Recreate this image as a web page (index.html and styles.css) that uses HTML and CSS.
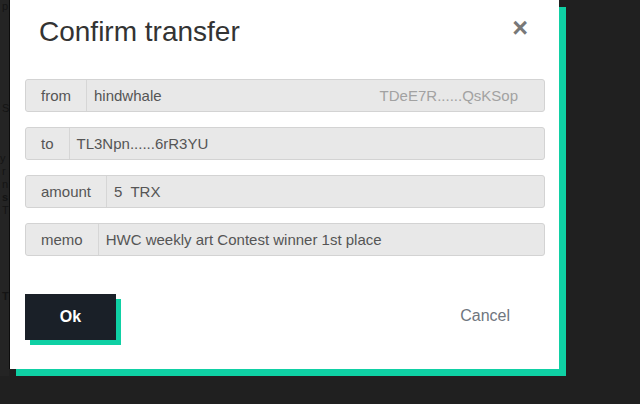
FILE: index.html
```html
<!DOCTYPE html>
<html lang="en">
<head>
    <meta charset="UTF-8">
    <meta name="viewport" content="width=device-width, initial-scale=1.0">
    <title>Confirm transfer</title>
    <link rel="stylesheet" href="styles.css">
</head>
<body>
    <div class="page-edge">
        <div class="ghost">p</div>
        <div class="ghost ghost-s">S</div>
        <div class="ghost ghost-y">y</div>
        <div class="ghost">r</div>
        <div class="ghost">n</div>
        <div class="ghost ghost-bold">s</div>
        <div class="ghost">T</div>
        <div class="ghost ghost-te">T</div>
    </div>

    <div class="modal">
        <div class="modal-header">
            <h4 class="modal-title">Confirm transfer</h4>
            <button class="close">&times;</button>
        </div>

        <div class="modal-body">
            <div class="input-group">
                <span class="addon">from</span>
                <span class="field">hindwhale</span>
                <span class="field-hint">TDeE7R......QsKSop</span>
            </div>
            <div class="input-group">
                <span class="addon">to</span>
                <span class="field">TL3Npn......6rR3YU</span>
            </div>
            <div class="input-group">
                <span class="addon">amount</span>
                <span class="field">5&nbsp; TRX</span>
            </div>
            <div class="input-group">
                <span class="addon">memo</span>
                <span class="field">HWC weekly art Contest winner 1st place</span>
            </div>
        </div>

        <div class="modal-footer">
            <button class="btn-ok">Ok</button>
            <button class="btn-cancel">Cancel</button>
        </div>
    </div>
</body>
</html>
```

FILE: styles.css
```css
body {
    margin: 0;
    height: 404px;
    overflow: hidden;
    background-color: #202020;
    font-family: "Liberation Sans", Arial, sans-serif;
    display: flex;
    align-items: flex-start;
}
.page-edge {
    width: 9px;
    height: 376px;
    overflow: hidden;
    background-color: #242424;
    color: #141414;
    font-size: 11px;
    line-height: 13px;
    white-space: nowrap;
}
.ghost {
    padding-left: 2px;
}
.ghost-s {
    margin-top: 89px;
}
.ghost-y {
    margin-top: 37px;
    padding-left: 0;
}
.ghost-bold {
    font-weight: bold;
}
.ghost-te {
    margin-top: 73px;
    font-weight: bold;
}
.modal {
    width: 549px;
    height: 369px;
    background-color: #fff;
    border-left: 1px solid #0c0c0c;
    box-shadow: 7px 7px 0 #0fd0a4;
}
.modal-header {
    display: flex;
    justify-content: space-between;
    align-items: flex-start;
    padding: 16px 31px 0 29px;
    height: 32px;
}
.modal-title {
    margin: 0;
    font-size: 28px;
    line-height: 32px;
    font-weight: normal;
    color: #333;
}
.close {
    margin-top: 0;
    padding: 0;
    border: none;
    background: none;
    font-family: "Liberation Sans", Arial, sans-serif;
    font-size: 27px;
    line-height: 24px;
    font-weight: bold;
    color: #787878;
    cursor: pointer;
}
.modal-body {
    padding: 31px 14px 0 15px;
}
.input-group {
    display: flex;
    height: 31px;
    margin-bottom: 15px;
    border: 1px solid #d3d3d3;
    border-radius: 3px;
    background-color: #e8e8e8;
    font-size: 15px;
    line-height: 31px;
    color: #555;
}
.input-group:last-child {
    margin-bottom: 0;
}
.addon {
    padding: 0 15px;
    border-right: 1px solid #d6d6d6;
    background-color: #e9e9e9;
    border-radius: 3px 0 0 3px;
}
.field {
    flex: 1;
    padding-left: 7px;
}
.field-hint {
    padding-right: 26px;
    color: #a2a2a2;
}
.modal-footer {
    display: flex;
    justify-content: space-between;
    align-items: center;
    padding: 38px 49px 29px 15px;
}
.btn-ok {
    width: 91px;
    height: 46px;
    border: none;
    background-color: #1a2028;
    color: #fff;
    font-family: "Liberation Sans", Arial, sans-serif;
    font-size: 16px;
    font-weight: bold;
    box-shadow: 5px 5px 0 #0fd0a4;
    cursor: pointer;
}
.btn-cancel {
    padding: 0;
    margin-bottom: 3px;
    border: none;
    background: none;
    font-family: "Liberation Sans", Arial, sans-serif;
    font-size: 16px;
    color: #6f767e;
    cursor: pointer;
}
```
